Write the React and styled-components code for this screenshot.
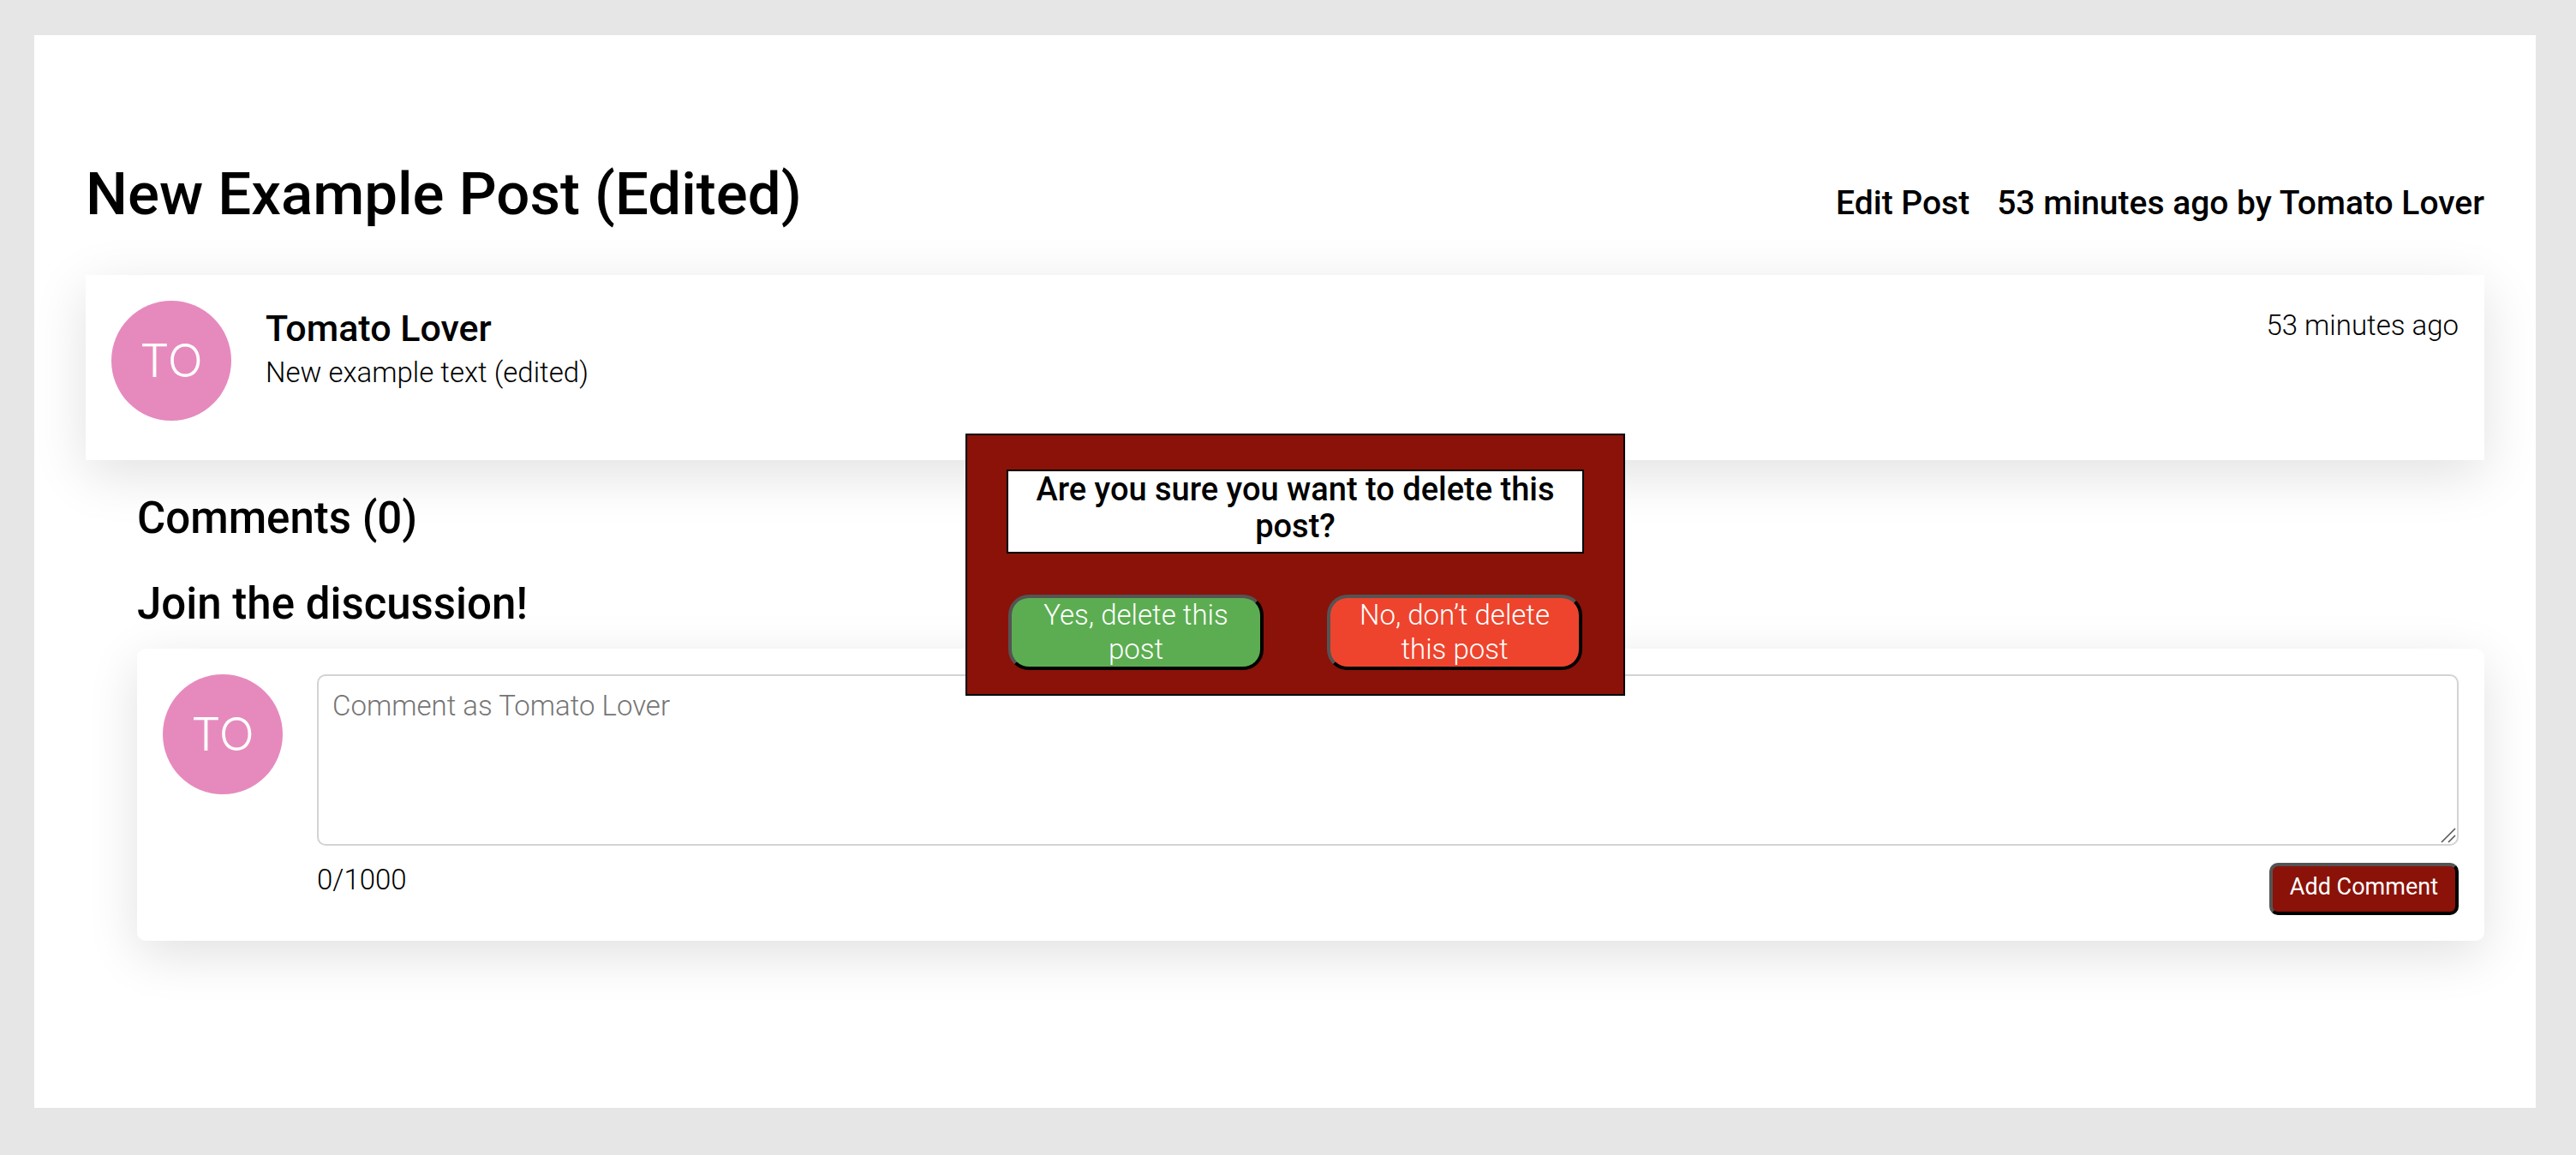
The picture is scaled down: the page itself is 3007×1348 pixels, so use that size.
import React, { useState } from 'react';
import styled, { createGlobalStyle } from 'styled-components';

const shadow = '0 16px 60px rgba(0, 0, 0, 0.12)';
const brand = '#8a1208';

const GlobalStyle = createGlobalStyle`
  *, *::before, *::after { box-sizing: border-box; }
  body {
    margin: 0;
    background: #e6e6e6;
    color: #000;
    font-family: Roboto, "Liberation Sans", sans-serif;
    font-size: 33px;
    font-weight: 350;
    line-height: 40px;
  }
  h1, h2, h3, p { margin: 0; font-weight: 500; }
`;

const Page = styled.div`
  min-height: 100vh;
  padding: 41px 47px 55px 40px;
  display: flex;
`;

const Panel = styled.main`
  flex: 1;
  padding: 138px 60px 0;
  background: #fff;
`;

const PostHeader = styled.header`
  display: flex;
  justify-content: space-between;
  align-items: baseline;
  height: 142px;
`;

const Title = styled.h1`
  font-size: 69px;
  line-height: 96px;
`;

const Meta = styled.div`
  display: flex;
  gap: 32px;
  font-size: 39px;
  line-height: 48px;
  font-weight: 500;
`;

const EditLink = styled.a`
  color: inherit;
  text-decoration: none;
`;

const Card = styled.section`
  display: flex;
  gap: 40px;
  padding: 30px;
  border-radius: ${(p) => p.$radius || 0}px;
  background: #fff;
  box-shadow: ${shadow};
`;

const PostCard = styled(Card)`
  min-height: 216px;
`;

const Avatar = styled.div`
  flex: none;
  display: grid;
  place-items: center;
  width: 140px;
  height: 140px;
  border-radius: 50%;
  background: #e68abe;
  color: #fff;
  font-family: Inter, "Liberation Sans", sans-serif;
  font-size: 54px;
`;

const PostBody = styled.div`
  flex: 1;
  padding-top: 8px;
`;

const Author = styled.h3`
  font-size: 43px;
  line-height: 48px;
`;

const PostText = styled.p`
  font-weight: 350;
  line-height: 56px;
`;

const Time = styled.time`
  padding-top: 9px;
`;

const Comments = styled.section`
  display: flex;
  flex-direction: column;
  padding: 18px 0 0 60px;
`;

const SectionTitle = styled.h2`
  font-size: 51px;
  line-height: 100px;
`;

const CommentCard = styled(Card)`
  margin-top: 2px;
`;

const CommentForm = styled.form`
  flex: 1;
  display: flex;
  flex-direction: column;
  gap: 20px;
`;

const BoxWrap = styled.div`
  position: relative;
`;

const CommentBox = styled.textarea`
  display: block;
  width: 100%;
  height: 200px;
  padding: 15px 16px;
  border: 2px solid #d3d3d3;
  border-radius: 10px;
  background: #fff;
  font: inherit;
  resize: vertical;
  &::placeholder { color: #757575; opacity: 1; }
  &::-webkit-resizer { background: transparent; }
`;

const Grip = styled.svg`
  position: absolute;
  right: 3px;
  bottom: 3px;
  pointer-events: none;
`;

const FormFooter = styled.div`
  display: flex;
  justify-content: space-between;
  align-items: flex-start;
`;

const SubmitButton = styled.button`
  height: 61px;
  padding: 0 20px 5px;
  border: 4px outset #000;
  border-radius: 10px;
  background: ${brand};
  color: #fff;
  font: 400 27px/40px Roboto, "Liberation Sans", sans-serif;
`;

const Overlay = styled.div`
  position: fixed;
  inset: 0;
  display: flex;
  justify-content: center;
  align-items: flex-start;
  padding: 506px 0 0 17px;
`;

const Dialog = styled.div`
  width: 770px;
  padding: 40px 46px 28px;
  border: 2px solid #000;
  background: ${brand};
`;

const Question = styled.h3`
  height: 98px;
  border: 2px solid #000;
  background: #fff;
  font-size: 38px;
  line-height: 43px;
  text-align: center;
`;

const Choices = styled.div`
  display: flex;
  justify-content: space-between;
  padding: 48px 2px 0;
`;

const ChoiceButton = styled.button`
  width: 298px;
  height: 88px;
  padding: 0 12px;
  border: 4px outset #000;
  border-radius: 24px;
  background: ${(p) => p.$color};
  color: #fff;
  font: inherit;
`;

export default function App() {
  const [comment, setComment] = useState('');
  return (
    <>
      <GlobalStyle />
      <Page>
        <Panel>
          <PostHeader>
            <Title>New Example Post (Edited)</Title>
            <Meta>
              <EditLink href="#edit">Edit Post</EditLink>
              <span>53 minutes ago by Tomato Lover</span>
            </Meta>
          </PostHeader>
          <PostCard>
            <Avatar>TO</Avatar>
            <PostBody>
              <Author>Tomato Lover</Author>
              <PostText>New example text (edited)</PostText>
            </PostBody>
            <Time>53 minutes ago</Time>
          </PostCard>
          <Comments>
            <SectionTitle>Comments (0)</SectionTitle>
            <SectionTitle>Join the discussion!</SectionTitle>
            <CommentCard $radius={10}>
              <Avatar>TO</Avatar>
              <CommentForm onSubmit={(e) => e.preventDefault()}>
                <BoxWrap>
                  <CommentBox
                    aria-label="Comment"
                    placeholder="Comment as Tomato Lover"
                    maxLength={1000}
                    value={comment}
                    onChange={(e) => setComment(e.target.value)}
                  />
                  <Grip width="18" height="18" viewBox="0 0 18 18" stroke="#555" strokeWidth="1.6" aria-hidden="true">
                    <path d="M1 17 17 1M9 17l8-8" />
                  </Grip>
                </BoxWrap>
                <FormFooter>
                  <span>{comment.length}/1000</span>
                  <SubmitButton type="submit">Add Comment</SubmitButton>
                </FormFooter>
              </CommentForm>
            </CommentCard>
          </Comments>
        </Panel>
      </Page>
      <Overlay>
        <Dialog role="dialog" aria-labelledby="delete-question">
          <Question id="delete-question">Are you sure you want to delete this post?</Question>
          <Choices>
            <ChoiceButton type="button" $color="#5cad51">Yes, delete this post</ChoiceButton>
            <ChoiceButton type="button" $color="#ee442d">No, don’t delete this post</ChoiceButton>
          </Choices>
        </Dialog>
      </Overlay>
    </>
  );
}
